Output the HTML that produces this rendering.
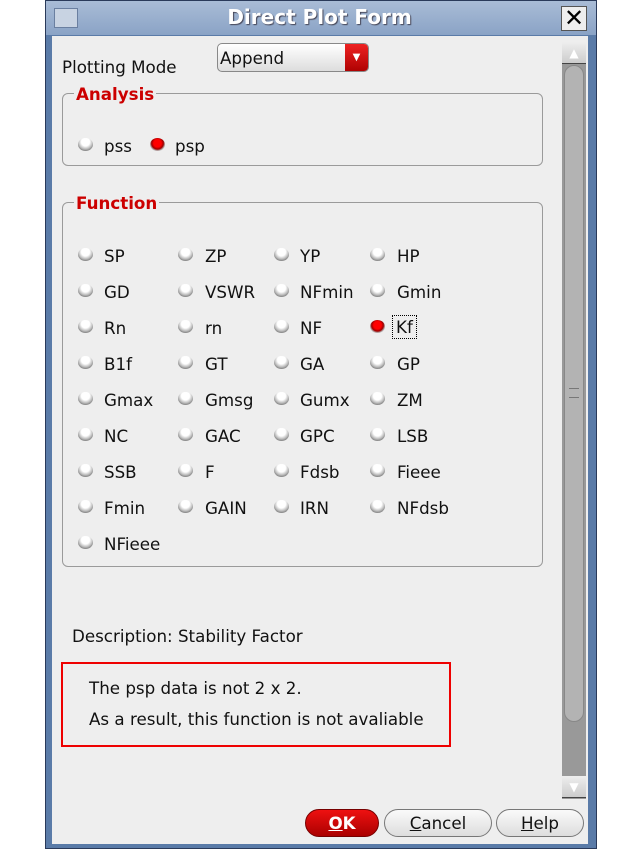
<!DOCTYPE html>
<html><head><meta charset="utf-8"><style>
*{margin:0;padding:0;box-sizing:border-box}
body{width:639px;height:855px;background:#fff;position:relative;overflow:hidden;font-family:"DejaVu Sans","Liberation Sans",sans-serif;font-size:16.7px;color:#111}
.a{position:absolute;white-space:nowrap}
.win{position:absolute;left:45px;top:0;width:552px;height:849px;background:#5a7ba8;border:1px solid #2a3a5a}
.title{position:absolute;left:46px;top:1px;width:550px;height:34px;background:linear-gradient(#a9bcd6,#8aa3c6);}
.body{position:absolute;left:52px;top:36px;width:536px;height:808px;background:#eeeeee}
.grp{position:absolute;border:1px solid #9a9a9a;border-radius:6px}
.leg{position:absolute;background:#eee;color:#c00;font-weight:bold;padding:0 2px}
.r{position:absolute;width:15px;height:13px;border-radius:50%;background:radial-gradient(circle at 50% 30%,#fff 35%,#bbb 60%,#333 100%)}
.r.on{background:radial-gradient(circle at 50% 40%,#f00 35%,#900 55%,#bbb 70%,#333 100%)}
.btn{position:absolute;height:28px;border:1px solid #777;border-radius:14px;background:linear-gradient(#fafafa,#ddd);text-align:center;line-height:26px}
</style></head><body>
<div class="win"></div>
<div class="title"></div>
<div class="a" style="left:54px;top:8px;width:24px;height:20px;background:#c8d3e2;border:1px solid #6a7fa0"></div>
<div class="a" style="left:0;width:639px;top:5px;text-align:center;font-weight:bold;font-size:20px;color:#fff;text-shadow:1px 1px 1px #445">Direct Plot Form</div>
<div class="a" style="left:561px;top:6px;width:26px;height:25px;background:#eee;border:1px solid #555;font-size:24px;line-height:22px;text-align:center;color:#000">✕</div>
<div class="body"></div>
<div class="a" style="left:562px;top:42px;width:24px;height:757px;background:#999"></div>
<div class="a" style="left:562px;top:42px;width:24px;height:22px;background:linear-gradient(#eee,#ccc);border-bottom:1px solid #444;color:#fff;text-align:center;font-size:12px;line-height:22px">▲</div>
<div class="a" style="left:564px;top:65px;width:20px;height:657px;background:#b3b3b3;border:1px solid #888;border-radius:10px"></div>
<div class="a" style="left:569px;top:388px;width:10px;height:10px;border-top:1px solid #777;border-bottom:1px solid #777"></div>
<div class="a" style="left:562px;top:776px;width:24px;height:22px;background:linear-gradient(#eee,#ccc);border-bottom:1px solid #444;color:#fff;text-align:center;font-size:12px;line-height:22px">▼</div>

<div class="a" style="left:62px;top:57px">Plotting Mode</div>
<div class="a" style="left:217px;top:43px;width:152px;height:29px;border:1px solid #888;border-radius:5px;background:linear-gradient(#fff,#ddd);overflow:hidden">
<span class="a" style="left:2px;top:4px">Append</span>
<span class="a" style="right:0;top:0;width:23px;height:29px;background:linear-gradient(#e22,#a00);color:#fff;font-size:10px;text-align:center;line-height:27px">▼</span></div>

<div class="grp" style="left:62px;top:93px;width:481px;height:73px"></div>
<div class="leg a" style="left:74px;top:84px">Analysis</div>
<div class="r" style="left:78px;top:138px"></div><div class="a" style="left:104px;top:136px">pss</div>
<div class="r on" style="left:150px;top:138px"></div><div class="a" style="left:175px;top:136px">psp</div>

<div class="grp" style="left:62px;top:202px;width:481px;height:365px"></div>
<div class="leg a" style="left:74px;top:193px">Function</div>

<div class="r" style="left:78px;top:248px"></div><div class="a" style="left:104px;top:246px">SP</div>
<div class="r" style="left:178px;top:248px"></div><div class="a" style="left:205px;top:246px">ZP</div>
<div class="r" style="left:274px;top:248px"></div><div class="a" style="left:300px;top:246px">YP</div>
<div class="r" style="left:370px;top:248px"></div><div class="a" style="left:397px;top:246px">HP</div>

<div class="r" style="left:78px;top:284px"></div><div class="a" style="left:104px;top:282px">GD</div>
<div class="r" style="left:178px;top:284px"></div><div class="a" style="left:205px;top:282px">VSWR</div>
<div class="r" style="left:274px;top:284px"></div><div class="a" style="left:300px;top:282px">NFmin</div>
<div class="r" style="left:370px;top:284px"></div><div class="a" style="left:397px;top:282px">Gmin</div>

<div class="r" style="left:78px;top:320px"></div><div class="a" style="left:104px;top:318px">Rn</div>
<div class="r" style="left:178px;top:320px"></div><div class="a" style="left:205px;top:318px">rn</div>
<div class="r" style="left:274px;top:320px"></div><div class="a" style="left:300px;top:318px">NF</div>
<div class="r on" style="left:370px;top:320px"></div><div class="a" style="left:392px;top:315px;border:1px dotted #000;padding:1px 3px">Kf</div>

<div class="r" style="left:78px;top:356px"></div><div class="a" style="left:104px;top:354px">B1f</div>
<div class="r" style="left:178px;top:356px"></div><div class="a" style="left:205px;top:354px">GT</div>
<div class="r" style="left:274px;top:356px"></div><div class="a" style="left:300px;top:354px">GA</div>
<div class="r" style="left:370px;top:356px"></div><div class="a" style="left:397px;top:354px">GP</div>

<div class="r" style="left:78px;top:392px"></div><div class="a" style="left:104px;top:390px">Gmax</div>
<div class="r" style="left:178px;top:392px"></div><div class="a" style="left:205px;top:390px">Gmsg</div>
<div class="r" style="left:274px;top:392px"></div><div class="a" style="left:300px;top:390px">Gumx</div>
<div class="r" style="left:370px;top:392px"></div><div class="a" style="left:397px;top:390px">ZM</div>

<div class="r" style="left:78px;top:428px"></div><div class="a" style="left:104px;top:426px">NC</div>
<div class="r" style="left:178px;top:428px"></div><div class="a" style="left:205px;top:426px">GAC</div>
<div class="r" style="left:274px;top:428px"></div><div class="a" style="left:300px;top:426px">GPC</div>
<div class="r" style="left:370px;top:428px"></div><div class="a" style="left:397px;top:426px">LSB</div>

<div class="r" style="left:78px;top:464px"></div><div class="a" style="left:104px;top:462px">SSB</div>
<div class="r" style="left:178px;top:464px"></div><div class="a" style="left:205px;top:462px">F</div>
<div class="r" style="left:274px;top:464px"></div><div class="a" style="left:300px;top:462px">Fdsb</div>
<div class="r" style="left:370px;top:464px"></div><div class="a" style="left:397px;top:462px">Fieee</div>

<div class="r" style="left:78px;top:500px"></div><div class="a" style="left:104px;top:498px">Fmin</div>
<div class="r" style="left:178px;top:500px"></div><div class="a" style="left:205px;top:498px">GAIN</div>
<div class="r" style="left:274px;top:500px"></div><div class="a" style="left:300px;top:498px">IRN</div>
<div class="r" style="left:370px;top:500px"></div><div class="a" style="left:397px;top:498px">NFdsb</div>

<div class="r" style="left:78px;top:536px"></div><div class="a" style="left:104px;top:534px">NFieee</div>

<div class="a" style="left:72px;top:626px">Description: Stability Factor</div>
<div class="a" style="left:61px;top:662px;width:390px;height:85px;border:2px solid #e00"></div>
<div class="a" style="left:89px;top:678px">The psp data is not 2 x 2.</div>
<div class="a" style="left:89px;top:709px">As a result, this function is not avaliable</div>

<div class="btn" style="left:305px;top:809px;width:74px;background:linear-gradient(#e11,#a00);color:#fff;font-weight:bold;border-color:#700"><u>O</u>K</div>
<div class="btn" style="left:384px;top:809px;width:108px"><u>C</u>ancel</div>
<div class="btn" style="left:496px;top:809px;width:88px"><u>H</u>elp</div>
</body></html>
